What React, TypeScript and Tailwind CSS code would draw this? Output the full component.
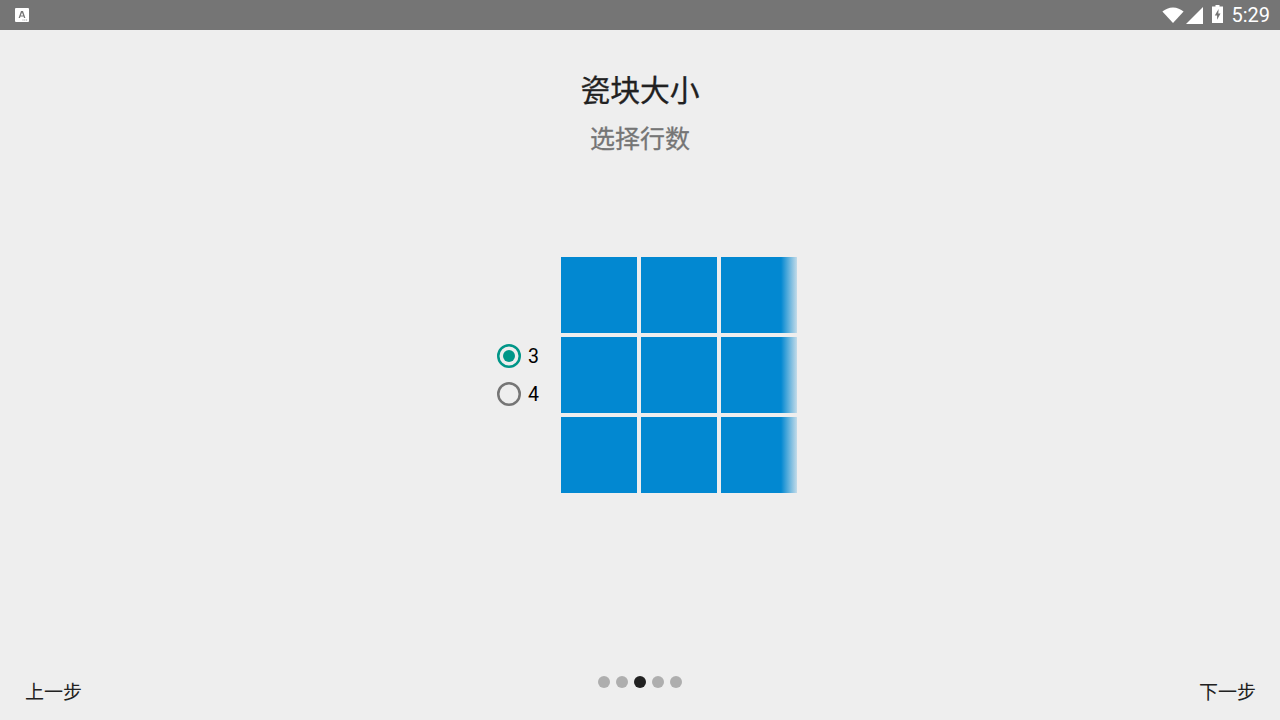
const FONT = 'font-["Roboto","Noto_Sans_CJK_SC",sans-serif]';

const ROWS = [0, 1, 2];
const PAGES = [0, 1, 2, 3, 4];

function StatusBar() {
  return (
    <div className="flex h-[30px] items-center justify-between bg-[#757575] pl-[15px] pr-[10px] text-white">
      <div className="relative h-[14px] w-[14px] rounded-[1px] bg-white">
        <svg viewBox="0 0 14 14" className="h-[14px] w-[14px]">
          <path d="M3.6 10 6 3h2l2.4 7H9l-.4-1.4H5.4L5 10zM5.8 7.4h2.4L7 4.4z" fill="#757575" />
          <path d="M7.5 11.4h1v1h-1zM9.3 11.4h1v1h-1zM11.1 11.4h1v1h-1z" fill="#9a9a9a" />
        </svg>
      </div>
      <div className="flex items-center">
        <svg viewBox="0 0 22 16" className="h-[16px] w-[22px]">
          <path d="M11 16 .4 4.6C3.2 2 6.9.4 11 .4s7.8 1.6 10.6 4.2z" fill="#fff" />
        </svg>
        <svg viewBox="0 0 17 17" className="ml-[2px] h-[17px] w-[17px]">
          <path d="M0 17 17 0v17z" fill="#fff" />
        </svg>
        <svg viewBox="0 0 11 18" className="ml-[9px] mb-[2px] h-[18px] w-[11px]">
          <path
            fillRule="evenodd"
            d="M3.5 0h4v1.6H11V18H0V1.6h3.5zM6.6 4 2.8 10.4h2.3v4.4l3.4-6.4H6.3z"
            fill="#fff"
          />
        </svg>
        <span className={`ml-[8px] text-[20px] leading-[30px] ${FONT}`}>5:29</span>
      </div>
    </div>
  );
}

function Radio({ label, checked }: { label: string; checked?: boolean }) {
  return (
    <div className="flex h-[38px] items-center">
      <svg viewBox="0 0 24 24" className="h-[24px] w-[24px]">
        <circle cx="12" cy="12" r="10.75" fill="none" strokeWidth="2.5" stroke={checked ? '#009688' : '#757575'} />
        {checked && <circle cx="12" cy="12" r="6" fill="#009688" />}
      </svg>
      <span className={`ml-[7px] mt-[2px] w-[11px] text-[19.5px] leading-none text-black ${FONT}`}>{label}</span>
    </div>
  );
}

function TileGrid() {
  return (
    <div className="relative grid grid-cols-[repeat(3,76px)] grid-rows-[repeat(3,76px)] gap-[4px]">
      {ROWS.flatMap((r) =>
        ROWS.map((c) => <div key={`${r}-${c}`} className="bg-[#0288d1]" />),
      )}
      {/* the grid fades out on its right edge */}
      <div className="absolute inset-y-0 right-0 w-[16px] bg-gradient-to-r from-[#eeeeee00] to-[#eeeeeed0]" />
    </div>
  );
}

export default function App() {
  return (
    <div className={`flex h-[720px] w-[1280px] flex-col overflow-hidden bg-[#eeeeee] ${FONT}`}>
      <StatusBar />

      <div className="flex flex-col items-center pt-[39px]">
        <h1 className="text-[29.8px] leading-[44px] font-normal text-[#212121] [-webkit-text-stroke:0.3px_#212121]">
          瓷块大小
        </h1>
        <p className="mt-[5px] text-[25px] leading-[44px] text-[#757575] [-webkit-text-stroke:0.3px_#757575]">
          选择行数
        </p>
      </div>

      <div className="mt-[95px] flex justify-center pl-[14px]">
        <div className="mr-[22px] flex flex-col justify-center">
          <Radio label="3" checked />
          <Radio label="4" />
        </div>
        <TileGrid />
      </div>

      <div className="mt-auto flex items-start justify-between pb-[14px] pl-[25px] pr-[24px]">
        <span className="mt-[4px] text-[19px] leading-[26px] text-[#212121]">上一步</span>
        <div className="mr-[1px] flex gap-[6px]">
          {PAGES.map((p) => (
            <span
              key={p}
              className={`h-[12px] w-[12px] rounded-full ${p === 2 ? 'bg-[#212121]' : 'bg-[#aeaeae]'}`}
            />
          ))}
        </div>
        <span className="mt-[4px] text-[19px] leading-[26px] text-[#212121]">下一步</span>
      </div>
    </div>
  );
}
